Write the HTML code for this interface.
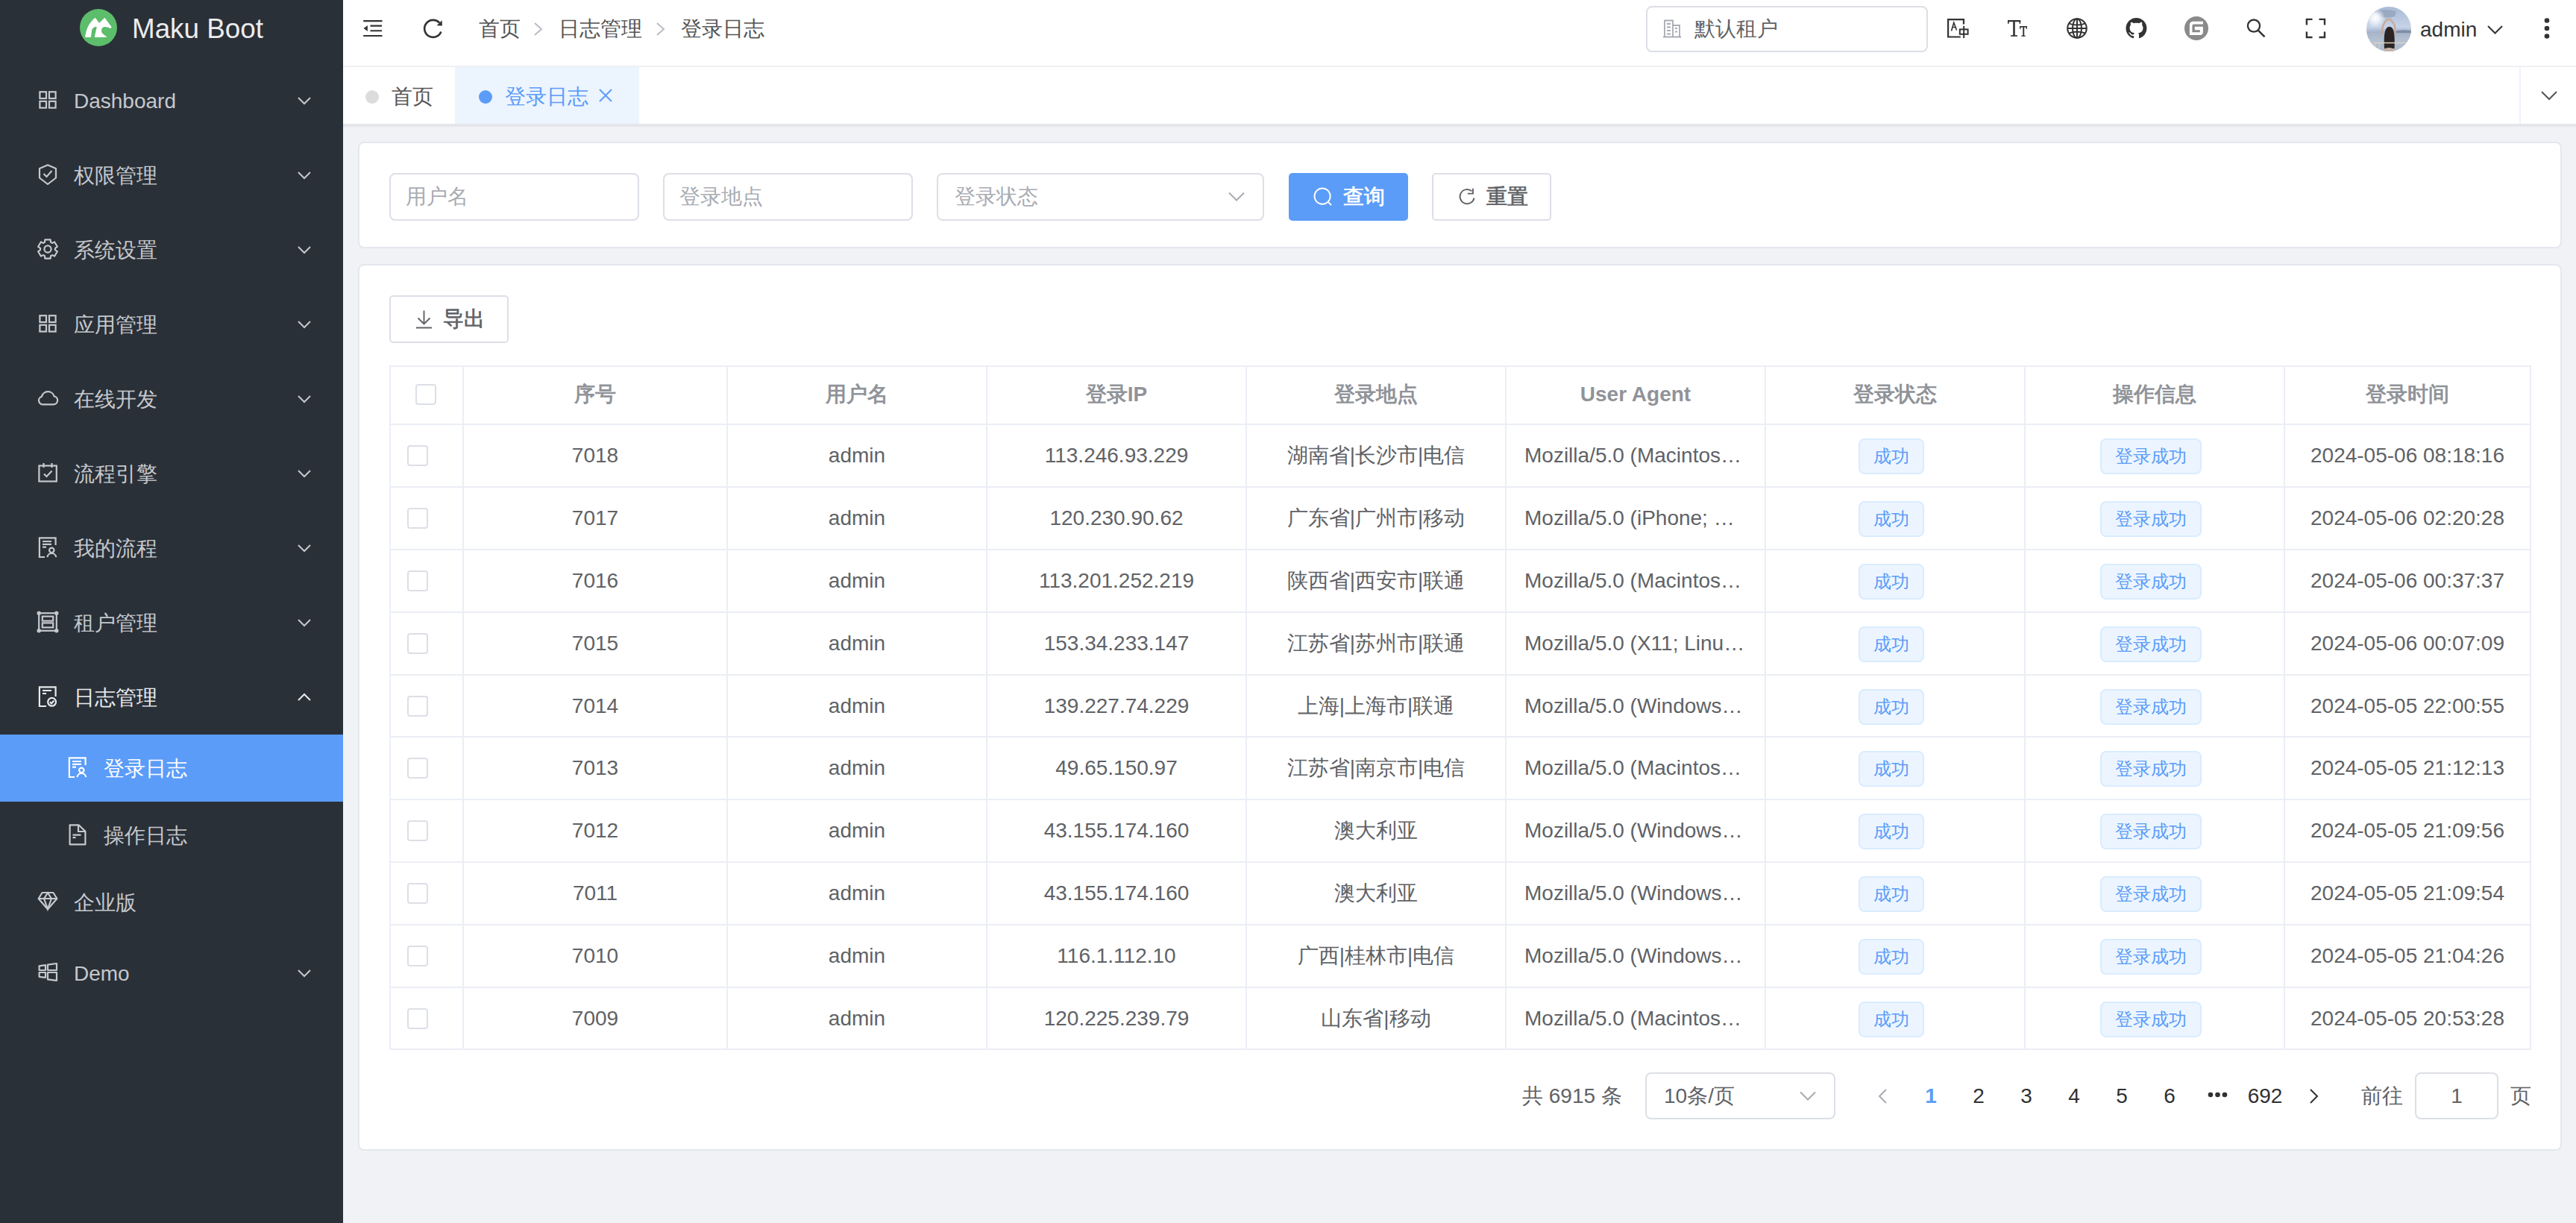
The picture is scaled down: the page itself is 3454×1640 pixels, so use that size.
<!DOCTYPE html>
<html><head><meta charset="utf-8">
<style>
*{box-sizing:border-box;margin:0;padding:0}
html,body{width:3454px;height:1640px;overflow:hidden}
body{position:relative;background:#f0f2f5;font-family:"Liberation Sans",sans-serif;color:#606266}
.a{position:absolute}
.t{position:absolute;white-space:nowrap;line-height:1}
svg{position:absolute;overflow:visible}
/* sidebar */
#sb{position:absolute;left:0;top:0;width:460px;height:1640px;background:#2a3038}
.mi{position:absolute;left:0;width:460px;height:100px}
.mi .t{left:99px;font-size:28px;color:#c5c8cc;top:36px}
.mi svg{left:50px;top:36px;width:28px;height:28px}
.mi .chev{left:398px;top:44px;width:20px;height:12px}
</style></head><body>
<div id="sb">
  <!-- logo -->
  <svg style="left:107px;top:12px" width="50" height="50" viewBox="0 0 50 50">
    <circle cx="25" cy="25" r="25" fill="#5cbd6b"/>
    <path d="M7.1 38 C8.5 26.5 13 17.5 20.6 11.8 L26.1 18.8 L33.4 11.8 L42.8 24.4 L41 25.9 C38.5 24.8 36 23.8 33 23.9 C28.8 24.4 27.6 30.5 31.2 33.6 L36.6 38 H19.7 L22.8 24 C19.5 23.5 16.6 25.6 16 29 L14.9 38 Z" fill="#fff"/></svg>
  <div class="t" style="left:177px;top:21px;font-size:36.8px;color:#ececec">Maku Boot</div>
<svg style="left:50px;top:120px" width="28" height="28" viewBox="0 0 28 28"><rect x="3.4" y="3.2" width="8.6" height="8.8" fill="none" stroke="#c5c8cc" stroke-width="2.2"/><rect x="16" y="3.2" width="8.6" height="8.8" fill="none" stroke="#c5c8cc" stroke-width="2.2"/><rect x="3.4" y="15.8" width="8.6" height="8.8" fill="none" stroke="#c5c8cc" stroke-width="2.2"/><rect x="16" y="15.8" width="8.6" height="8.8" fill="none" stroke="#c5c8cc" stroke-width="2.2"/></svg>
<div class="t" style="left:99px;top:122px;font-size:28px;color:#c5c8cc">Dashboard</div>
<svg style="left:399px;top:130px" width="18" height="10" viewBox="0 0 18 10"><polyline points="1,1 9,9 17,1" fill="none" stroke="#c5c8cc" stroke-width="2"/></svg>
<svg style="left:50px;top:220px" width="28" height="28" viewBox="0 0 28 28"><path d="M14 1.3 L25 6 V18.5 L14 27 L3 18.5 V6 Z" fill="none" stroke="#c5c8cc" stroke-width="2.2" stroke-linejoin="round"/><path d="M8.5 13 L12.5 17 L19.5 9" fill="none" stroke="#c5c8cc" stroke-width="2.2"/></svg>
<div class="t" style="left:99px;top:222px;font-size:28px;color:#c5c8cc">权限管理</div>
<svg style="left:399px;top:230px" width="18" height="10" viewBox="0 0 18 10"><polyline points="1,1 9,9 17,1" fill="none" stroke="#c5c8cc" stroke-width="2"/></svg>
<svg style="left:50px;top:320px" width="28" height="28" viewBox="0 0 28 28"><path d="M9.92 4.87 L10.35 1.31 L17.65 1.31 L18.08 4.87 L19.87 5.90 L23.16 4.50 L26.81 10.82 L23.95 12.97 L23.95 15.03 L26.81 17.18 L23.16 23.50 L19.87 22.10 L18.08 23.13 L17.65 26.69 L10.35 26.69 L9.92 23.13 L8.13 22.10 L4.84 23.50 L1.19 17.18 L4.05 15.03 L4.05 12.97 L1.19 10.82 L4.84 4.50 L8.13 5.90 Z" fill="none" stroke="#c5c8cc" stroke-width="2.2" stroke-linejoin="round"/><circle cx="14" cy="14" r="4.6" fill="none" stroke="#c5c8cc" stroke-width="2.2"/></svg>
<div class="t" style="left:99px;top:322px;font-size:28px;color:#c5c8cc">系统设置</div>
<svg style="left:399px;top:330px" width="18" height="10" viewBox="0 0 18 10"><polyline points="1,1 9,9 17,1" fill="none" stroke="#c5c8cc" stroke-width="2"/></svg>
<svg style="left:50px;top:420px" width="28" height="28" viewBox="0 0 28 28"><rect x="3.4" y="3.2" width="8.6" height="8.8" fill="none" stroke="#c5c8cc" stroke-width="2.2"/><rect x="16" y="3.2" width="8.6" height="8.8" fill="none" stroke="#c5c8cc" stroke-width="2.2"/><rect x="3.4" y="15.8" width="8.6" height="8.8" fill="none" stroke="#c5c8cc" stroke-width="2.2"/><rect x="16" y="15.8" width="8.6" height="8.8" fill="none" stroke="#c5c8cc" stroke-width="2.2"/></svg>
<div class="t" style="left:99px;top:422px;font-size:28px;color:#c5c8cc">应用管理</div>
<svg style="left:399px;top:430px" width="18" height="10" viewBox="0 0 18 10"><polyline points="1,1 9,9 17,1" fill="none" stroke="#c5c8cc" stroke-width="2"/></svg>
<svg style="left:50px;top:520px" width="28" height="28" viewBox="0 0 28 28"><path d="M7.5 22.4 H21.5 A5.6 5.6 0 0 0 22.6 11.3 A8.6 8.6 0 0 0 6 11.8 A5.4 5.4 0 0 0 7.5 22.4 Z" fill="none" stroke="#c5c8cc" stroke-width="2.2"/></svg>
<div class="t" style="left:99px;top:522px;font-size:28px;color:#c5c8cc">在线开发</div>
<svg style="left:399px;top:530px" width="18" height="10" viewBox="0 0 18 10"><polyline points="1,1 9,9 17,1" fill="none" stroke="#c5c8cc" stroke-width="2"/></svg>
<svg style="left:50px;top:620px" width="28" height="28" viewBox="0 0 28 28"><rect x="2.4" y="4.5" width="23.4" height="21" fill="none" stroke="#c5c8cc" stroke-width="2.2"/><path d="M8.5 1 V7 M19.5 1 V7" fill="none" stroke="#c5c8cc" stroke-width="2.2"/><path d="M9 15.5 L12.5 19 L19.5 11.5" fill="none" stroke="#c5c8cc" stroke-width="2.2"/></svg>
<div class="t" style="left:99px;top:622px;font-size:28px;color:#c5c8cc">流程引擎</div>
<svg style="left:399px;top:630px" width="18" height="10" viewBox="0 0 18 10"><polyline points="1,1 9,9 17,1" fill="none" stroke="#c5c8cc" stroke-width="2"/></svg>
<svg style="left:50px;top:720px" width="28" height="28" viewBox="0 0 28 28"><path d="M10 27 H2.9 V1.3 H24.6 V11" fill="none" stroke="#c5c8cc" stroke-width="2.2"/><path d="M7 6 H19 M7 9.8 H19 M7 13.6 H12" fill="none" stroke="#c5c8cc" stroke-width="2.2"/><circle cx="19.3" cy="17.8" r="3.2" fill="none" stroke="#c5c8cc" stroke-width="2.2"/><path d="M13.4 27.2 A6 6 0 0 1 25.3 27.2" fill="none" stroke="#c5c8cc" stroke-width="2.2"/></svg>
<div class="t" style="left:99px;top:722px;font-size:28px;color:#c5c8cc">我的流程</div>
<svg style="left:399px;top:730px" width="18" height="10" viewBox="0 0 18 10"><polyline points="1,1 9,9 17,1" fill="none" stroke="#c5c8cc" stroke-width="2"/></svg>
<svg style="left:50px;top:820px" width="28" height="28" viewBox="0 0 28 28"><rect x="2.2" y="2.2" width="23.6" height="23.6" fill="none" stroke="#c5c8cc" stroke-width="2.2"/><rect x="6.8" y="6.6" width="14.4" height="6" fill="none" stroke="#c5c8cc" stroke-width="2.2"/><rect x="6.8" y="15.4" width="14.4" height="6" fill="none" stroke="#c5c8cc" stroke-width="2.2"/><circle cx="2.2" cy="2.2" r="1.6" fill="none" stroke="#c5c8cc" stroke-width="2.2" stroke-width="1.4"/><circle cx="25.8" cy="2.2" r="1.6" fill="none" stroke="#c5c8cc" stroke-width="2.2" stroke-width="1.4"/><circle cx="2.2" cy="25.8" r="1.6" fill="none" stroke="#c5c8cc" stroke-width="2.2" stroke-width="1.4"/><circle cx="25.8" cy="25.8" r="1.6" fill="none" stroke="#c5c8cc" stroke-width="2.2" stroke-width="1.4"/></svg>
<div class="t" style="left:99px;top:822px;font-size:28px;color:#c5c8cc">租户管理</div>
<svg style="left:399px;top:830px" width="18" height="10" viewBox="0 0 18 10"><polyline points="1,1 9,9 17,1" fill="none" stroke="#c5c8cc" stroke-width="2"/></svg>
<svg style="left:50px;top:920px" width="28" height="28" viewBox="0 0 28 28"><path d="M12 27 H2.9 V1.3 H24.6 V14" fill="none" stroke="#e8eaec" stroke-width="2.2"/><path d="M7 6 H19 M7 10 H12" fill="none" stroke="#e8eaec" stroke-width="2.2"/><circle cx="19.6" cy="21.3" r="5.4" fill="none" stroke="#e8eaec" stroke-width="2.2"/><path d="M17 21.3 L19 23.3 L22.3 19.6" fill="none" stroke="#e8eaec" stroke-width="2.2" stroke-width="1.8"/></svg>
<div class="t" style="left:99px;top:922px;font-size:28px;color:#e8eaec">日志管理</div>
<svg style="left:399px;top:930px" width="18" height="10" viewBox="0 0 18 10"><polyline points="1,9 9,1 17,9" fill="none" stroke="#e8eaec" stroke-width="2"/></svg>
<div class="a" style="left:0;top:985px;width:460px;height:90px;background:#5b9cf8"></div>
<svg style="left:90px;top:1015px" width="28" height="28" viewBox="0 0 28 28"><path d="M10 27 H2.9 V1.3 H24.6 V11" fill="none" stroke="#ffffff" stroke-width="2.2"/><path d="M7 6 H19 M7 9.8 H19 M7 13.6 H12" fill="none" stroke="#ffffff" stroke-width="2.2"/><circle cx="19.3" cy="17.8" r="3.2" fill="none" stroke="#ffffff" stroke-width="2.2"/><path d="M13.4 27.2 A6 6 0 0 1 25.3 27.2" fill="none" stroke="#ffffff" stroke-width="2.2"/></svg>
<div class="t" style="left:139px;top:1017px;font-size:28px;color:#ffffff">登录日志</div>
<svg style="left:90px;top:1105px" width="28" height="28" viewBox="0 0 28 28"><path d="M3.6 1.3 H15.5 L24.4 9.8 V27.3 H3.6 Z" fill="none" stroke="#c5c8cc" stroke-width="2.2" stroke-linejoin="round"/><path d="M15 1.5 V10 H24" fill="none" stroke="#c5c8cc" stroke-width="2.2"/><path d="M7.5 14.6 H18.5 M7.5 18.2 H11.5" fill="none" stroke="#c5c8cc" stroke-width="2.2"/></svg>
<div class="t" style="left:139px;top:1107px;font-size:28px;color:#c5c8cc">操作日志</div>
<svg style="left:50px;top:1195px" width="28" height="28" viewBox="0 0 28 28"><path d="M1.6 10 L6.6 2 H21.4 L26.4 10 L14 24.3 Z" fill="none" stroke="#c5c8cc" stroke-width="2.2" stroke-width="1.8" stroke-linejoin="round"/><path d="M1.6 10 H26.4 M9 10 L14 2.2 L19 10 M9 10 L14 24 L19 10" fill="none" stroke="#c5c8cc" stroke-width="2.2" stroke-width="1.6"/></svg>
<div class="t" style="left:99px;top:1197px;font-size:28px;color:#c5c8cc">企业版</div>
<svg style="left:50px;top:1290px" width="28" height="28" viewBox="0 0 28 28"><path d="M2.6 5.3 L11 4.2 V11 H2.6 Z M14 3.6 L26 2 V11 H14 Z M2.6 14 H11 V20.8 L2.6 19.8 Z M14 14 H26 V24.8 L14 23.3 Z" fill="none" stroke="#c5c8cc" stroke-width="2.2" stroke-linejoin="round"/></svg>
<div class="t" style="left:99px;top:1292px;font-size:28px;color:#c5c8cc">Demo</div>
<svg style="left:399px;top:1300px" width="18" height="10" viewBox="0 0 18 10"><polyline points="1,1 9,9 17,1" fill="none" stroke="#c5c8cc" stroke-width="2"/></svg>
</div>

<!-- header -->
<div class="a" style="left:460px;top:0;width:2994px;height:88px;background:#fff"></div>
<div class="a" style="left:460px;top:88px;width:2994px;height:2px;background:#eff0f3"></div>
<svg style="left:486px;top:24px" width="28" height="28" viewBox="0 0 28 28"><path d="M1.2 4.1 H26.5 M10.5 10.6 H26 M10.5 17.2 H26 M1.2 24 H26.5" stroke="#333333" stroke-width="2.1"/><path d="M1.6 14 L6.9 9.9 V18.1 Z" fill="#333333"/></svg>
<svg style="left:565px;top:24px" width="30" height="30" viewBox="0 0 30 30"><path d="M26.4 18.5 A11.5 11.5 0 1 1 24.2 6.6" fill="none" stroke="#333333" stroke-width="2.6"/><path d="M27.6 3.2 L27.9 10.5 L20.6 10.2 Z" fill="#333333"/></svg>
<div class="t" style="left:642px;top:25px;font-size:28px;color:#555">首页</div>
<svg style="left:716px;top:30px" width="14" height="18" viewBox="0 0 14 18"><polyline points="1,1 10,9 1,17" fill="none" stroke="#b8bcc4" stroke-width="2"/></svg>
<div class="t" style="left:749px;top:25px;font-size:28px;color:#555">日志管理</div>
<svg style="left:880px;top:30px" width="14" height="18" viewBox="0 0 14 18"><polyline points="1,1 10,9 1,17" fill="none" stroke="#b8bcc4" stroke-width="2"/></svg>
<div class="t" style="left:913px;top:25px;font-size:28px;color:#555">登录日志</div>

<!-- tenant select -->
<div class="a" style="left:2207px;top:8px;width:378px;height:62px;border:2px solid #dcdfe6;border-radius:8px;background:#fff"></div>
<svg style="left:2228px;top:25px" width="28" height="28" viewBox="0 0 28 28"><path d="M2 24.5 H26 M4 24 V2.5 H15 V24 M15 9 H24 V24 M7 7 H12 M7 11.5 H12 M7 16 H12 M7 20.5 H12 M18 13 H21 M18 17.5 H21" fill="none" stroke="#a8abb2" stroke-width="1.8"/></svg>
<div class="t" style="left:2272px;top:25px;font-size:28px;color:#606266">默认租户</div>

<!-- right icons -->
<svg style="left:2611px;top:25px" width="30" height="27" viewBox="0 0 30 27"><path d="M1.1 25.5 V1.1 H22 V7.5 M1.1 24.5 H17.8" fill="none" stroke="#333333" stroke-width="2.2"/><path d="M5.5 16.5 L8.8 5.3 L12.5 15.5" fill="none" stroke="#333333" stroke-width="1.6"/><path d="M6.5 11.5 H12" stroke="#333333" stroke-width="1.4"/><rect x="16.8" y="14.4" width="10.8" height="6.4" fill="none" stroke="#333333" stroke-width="2"/><path d="M22.2 10 V26" stroke="#333333" stroke-width="2"/></svg>
<svg style="left:2690px;top:25px" width="30" height="26" viewBox="0 0 30 26"><g fill="#333333">
<rect x="2" y="2" width="17.2" height="2.2"/><rect x="2" y="2" width="1.7" height="4.7"/><rect x="17.5" y="2" width="1.7" height="4.7"/><rect x="9.2" y="2" width="2.6" height="21.8"/><rect x="6" y="22.2" width="9" height="1.6"/>
<rect x="18.2" y="10" width="9.8" height="1.6"/><rect x="18.2" y="10" width="1.4" height="3.8"/><rect x="26.6" y="10" width="1.4" height="3.8"/><rect x="22.3" y="10" width="1.9" height="13.8"/><rect x="20.2" y="22.6" width="5.6" height="1.2"/>
</g></svg>
<svg style="left:2771px;top:24px" width="28" height="28" viewBox="0 0 28 28"><g fill="none" stroke="#333333" stroke-width="2"><circle cx="14" cy="14" r="12.8"/><ellipse cx="14" cy="14" rx="6" ry="12.8"/><path d="M14 1.2 V26.8 M1.2 14 H26.8 M3.5 7.6 Q14 11.5 24.5 7.6 M3.5 20.4 Q14 16.5 24.5 20.4"/></g></svg>
<svg style="left:2850px;top:24px" width="29" height="28" viewBox="0 0 16 16"><path fill="#333333" d="M8 0C3.58 0 0 3.58 0 8c0 3.54 2.29 6.53 5.47 7.59.4.07.55-.17.55-.38 0-.19-.01-.82-.01-1.49-2.01.37-2.53-.49-2.69-.94-.09-.23-.48-.94-.82-1.13-.28-.15-.68-.52-.01-.53.63-.01 1.08.58 1.23.82.72 1.21 1.87.87 2.33.66.07-.52.28-.87.51-1.07-1.78-.2-3.64-.89-3.64-3.95 0-.87.31-1.59.82-2.15-.08-.2-.36-1.02.08-2.12 0 0 .67-.21 2.2.82.64-.18 1.32-.27 2-.27.68 0 1.36.09 2 .27 1.53-1.04 2.2-.82 2.2-.82.44 1.1.16 1.92.08 2.12.51.56.82 1.27.82 2.15 0 3.07-1.87 3.75-3.65 3.95.29.25.54.73.54 1.48 0 1.07-.01 1.93-.01 2.2 0 .21.15.46.55.38A8.013 8.013 0 0016 8c0-4.42-3.58-8-8-8z"/></svg>
<svg style="left:2929px;top:22px" width="32" height="32" viewBox="0 0 32 32"><circle cx="16" cy="16" r="16" fill="#8a8a8a"/><path d="M11.9 6.8 H24.9 V10.4 H12.4 Q10.4 10.4 10.4 12.4 V21.2 H20.8 V18.2 H13.8 V13.8 H24.9 V21 Q24.9 25.1 20.8 25.1 H6.9 V11.8 Q6.9 6.8 11.9 6.8 Z" fill="#fff"/></svg>
<svg style="left:3011px;top:24px" width="28" height="28" viewBox="0 0 28 28"><circle cx="11" cy="10.6" r="8.1" fill="none" stroke="#333333" stroke-width="2.3"/><path d="M16.8 16.6 L25.5 25.3" stroke="#333333" stroke-width="2.5"/></svg>
<svg style="left:3091px;top:24px" width="28" height="28" viewBox="0 0 28 28"><path d="M9.5 1.9 H1.9 V9.5 M18.5 1.9 H26 V9.5 M1.9 18.5 V26 H9.5 M26 18.5 V26 H18.5" fill="none" stroke="#333333" stroke-width="2.4"/></svg>
<!-- avatar -->
<svg style="left:3173px;top:9px" width="60" height="60" viewBox="0 0 60 60">
<defs>
<clipPath id="avc"><circle cx="30" cy="30" r="30"/></clipPath>
<linearGradient id="avsky" x1="0" y1="0" x2="0" y2="1"><stop offset="0" stop-color="#a9bad6"/><stop offset="0.45" stop-color="#c6d3e8"/><stop offset="0.56" stop-color="#a7b5cc"/><stop offset="0.6" stop-color="#9aa9c2"/><stop offset="0.75" stop-color="#b6c2d4"/><stop offset="1" stop-color="#a6b2c6"/></linearGradient>
<radialGradient id="avsun" cx="0.5" cy="0.5" r="0.5"><stop offset="0" stop-color="#ffffff"/><stop offset="0.4" stop-color="#f4f7fc" stop-opacity="0.9"/><stop offset="1" stop-color="#ffffff" stop-opacity="0"/></radialGradient>
</defs>
<g clip-path="url(#avc)">
<rect width="60" height="60" fill="url(#avsky)"/>
<path d="M10 6 Q25 2 40 6 L38 13 Q28 16 18 13 Z" fill="#93a3bb" opacity="0.8"/>
<circle cx="12" cy="15" r="13" fill="url(#avsun)"/>
<path d="M36 33 Q48 30 60 32 V36 H36 Z" fill="#7e8ea8"/>
<rect x="0" y="35" width="60" height="25" fill="#b3bfd1" opacity="0.6"/>
<path d="M22 38 Q20 28 24 22 Q26 19 28 17.5 M38 38 Q40 28 36 22 Q34 19 32 17.5" fill="none" stroke="#c9ab9c" stroke-width="2.4"/>
<path d="M26.5 17.5 Q28.5 15 30 18 Q31.5 15 33.5 17.5" fill="none" stroke="#c9ab9c" stroke-width="1.6"/>
<path d="M24 56 Q23 40 25 33 Q27 26.5 31 26.8 Q35 27 36.5 33 Q38.5 42 37.5 56 Z" fill="#2a2523"/>
<path d="M9 48.5 H56" stroke="#dcd2c6" stroke-width="1.6"/>
<path d="M12 48 V58 M17 48 V58" stroke="#d8cdc0" stroke-width="1.2"/>
<path d="M22 60 Q24 55 30 55 Q37 55 40 60 Z" fill="#c5b2a8"/>
</g>
</svg>
<div class="t" style="left:3245px;top:26px;font-size:28px;color:#333333">admin</div>
<svg style="left:3335px;top:34px" width="22" height="12" viewBox="0 0 22 12"><polyline points="1,1 10.5,10.5 20,1" fill="none" stroke="#333333" stroke-width="2"/></svg>
<svg style="left:3409px;top:23px" width="12" height="30" viewBox="0 0 12 30"><circle cx="6" cy="4.5" r="3.3" fill="#333333"/><circle cx="6" cy="15" r="3.3" fill="#333333"/><circle cx="6" cy="25.5" r="3.3" fill="#333333"/></svg>

<!-- tabs -->
<div class="a" style="left:460px;top:90px;width:2994px;height:76px;background:#fff"></div>
<div class="a" style="left:460px;top:166px;width:2994px;height:4px;background:#e4e6eb"></div>
<div class="a" style="left:490px;top:121px;width:18px;height:18px;border-radius:50%;background:#dcdcdc"></div>
<div class="t" style="left:525px;top:116px;font-size:28px;color:#555">首页</div>
<div class="a" style="left:610px;top:90px;width:247px;height:76px;background:#ecf4fe"></div>
<div class="a" style="left:642px;top:121px;width:18px;height:18px;border-radius:50%;background:#5b9cf8"></div>
<div class="t" style="left:677px;top:116px;font-size:28px;color:#5b9cf8">登录日志</div>
<svg style="left:802px;top:118px" width="20" height="20" viewBox="0 0 20 20"><path d="M2 2 L18 18 M18 2 L2 18" stroke="#5b9cf8" stroke-width="2"/></svg>
<div class="a" style="left:3378px;top:90px;width:2px;height:76px;background:#eef3fb"></div>
<svg style="left:3407px;top:122px" width="22" height="12" viewBox="0 0 22 12"><polyline points="1,1 11,11 21,1" fill="none" stroke="#555" stroke-width="2"/></svg>


<!-- card1: search -->
<div class="a" style="left:480px;top:190px;width:2955px;height:143px;background:#fff;border:2px solid #e4e7ed;border-radius:8px"></div>
<div class="a" style="left:522px;top:232px;width:335px;height:64px;border:2px solid #dcdfe6;border-radius:8px"></div>
<div class="t" style="left:544px;top:250px;font-size:28px;color:#a8abb2">用户名</div>
<div class="a" style="left:889px;top:232px;width:335px;height:64px;border:2px solid #dcdfe6;border-radius:8px"></div>
<div class="t" style="left:911px;top:250px;font-size:28px;color:#a8abb2">登录地点</div>
<div class="a" style="left:1256px;top:232px;width:439px;height:64px;border:2px solid #dcdfe6;border-radius:8px"></div>
<div class="t" style="left:1280px;top:250px;font-size:28px;color:#a8abb2">登录状态</div>
<svg style="left:1647px;top:257px" width="22" height="14" viewBox="0 0 22 14"><polyline points="1,1.5 11,11.5 21,1.5" fill="none" stroke="#a8abb2" stroke-width="2"/></svg>
<div class="a" style="left:1728px;top:232px;width:160px;height:64px;background:#5b9cf8;border-radius:5px"></div>
<svg style="left:1760px;top:250px" width="28" height="28" viewBox="0 0 28 28"><circle cx="13.1" cy="13.1" r="10.6" fill="none" stroke="#fff" stroke-width="1.9"/><path d="M20.6 20.6 L25 25" stroke="#fff" stroke-width="1.9"/></svg>
<div class="t" style="left:1801px;top:250px;font-size:28px;-webkit-text-stroke:0.7px #fff;color:#fff">查询</div>
<div class="a" style="left:1920px;top:232px;width:160px;height:64px;border:2px solid #dcdfe6;border-radius:5px;background:#fff"></div>
<svg style="left:1953px;top:250px" width="28" height="28" viewBox="0 0 28 28"><path d="M23.6 15.5 A9.6 9.6 0 1 1 20.4 6.3" fill="none" stroke="#606266" stroke-width="1.9"/><path d="M14.8 5.6 H22 V-1.2" fill="none" stroke="#606266" stroke-width="1.9" transform="translate(0,4)"/></svg>
<div class="t" style="left:1993px;top:250px;font-size:28px;-webkit-text-stroke:0.7px #606266;color:#606266">重置</div>

<!-- card2: table -->
<div class="a" style="left:480px;top:354px;width:2955px;height:1189px;background:#fff;border:2px solid #e4e7ed;border-radius:8px"></div>
<div class="a" style="left:522px;top:396px;width:160px;height:64px;border:2px solid #dcdfe6;border-radius:5px"></div>
<svg style="left:555px;top:414px" width="28" height="28" viewBox="0 0 28 28"><path d="M13.5 2.5 V20.5 M5.5 12.5 L13.5 20.5 L21.5 12.5 M3 25.5 H24" fill="none" stroke="#606266" stroke-width="1.9"/></svg>
<div class="t" style="left:594px;top:414px;font-size:28px;-webkit-text-stroke:0.7px #606266;color:#606266">导出</div>
<div class="a" style="left:522px;top:490px;width:2872px;height:918px;border:2px solid #ebeef5"></div>
<div class="a" style="left:620px;top:490px;width:2px;height:918px;background:#ebeef5"></div>
<div class="a" style="left:974px;top:490px;width:2px;height:918px;background:#ebeef5"></div>
<div class="a" style="left:1322px;top:490px;width:2px;height:918px;background:#ebeef5"></div>
<div class="a" style="left:1670px;top:490px;width:2px;height:918px;background:#ebeef5"></div>
<div class="a" style="left:2018px;top:490px;width:2px;height:918px;background:#ebeef5"></div>
<div class="a" style="left:2366px;top:490px;width:2px;height:918px;background:#ebeef5"></div>
<div class="a" style="left:2714px;top:490px;width:2px;height:918px;background:#ebeef5"></div>
<div class="a" style="left:3062px;top:490px;width:2px;height:918px;background:#ebeef5"></div>
<div class="a" style="left:522px;top:568px;width:2872px;height:2px;background:#ebeef5"></div>
<div class="a" style="left:522px;top:652px;width:2872px;height:2px;background:#ebeef5"></div>
<div class="a" style="left:522px;top:736px;width:2872px;height:2px;background:#ebeef5"></div>
<div class="a" style="left:522px;top:820px;width:2872px;height:2px;background:#ebeef5"></div>
<div class="a" style="left:522px;top:904px;width:2872px;height:2px;background:#ebeef5"></div>
<div class="a" style="left:522px;top:987px;width:2872px;height:2px;background:#ebeef5"></div>
<div class="a" style="left:522px;top:1071px;width:2872px;height:2px;background:#ebeef5"></div>
<div class="a" style="left:522px;top:1155px;width:2872px;height:2px;background:#ebeef5"></div>
<div class="a" style="left:522px;top:1239px;width:2872px;height:2px;background:#ebeef5"></div>
<div class="a" style="left:522px;top:1323px;width:2872px;height:2px;background:#ebeef5"></div>
<div class="a" style="left:557px;top:515px;width:28px;height:28px;border:2px solid #dcdfe6;border-radius:4px;background:#fff"></div>
<div class="t" style="left:622px;width:352px;text-align:center;top:515px;font-size:28px;font-weight:bold;color:#909399">序号</div>
<div class="t" style="left:976px;width:346px;text-align:center;top:515px;font-size:28px;font-weight:bold;color:#909399">用户名</div>
<div class="t" style="left:1324px;width:346px;text-align:center;top:515px;font-size:28px;font-weight:bold;color:#909399">登录IP</div>
<div class="t" style="left:1672px;width:346px;text-align:center;top:515px;font-size:28px;font-weight:bold;color:#909399">登录地点</div>
<div class="t" style="left:2020px;width:346px;text-align:center;top:515px;font-size:28px;font-weight:bold;color:#909399">User Agent</div>
<div class="t" style="left:2368px;width:346px;text-align:center;top:515px;font-size:28px;font-weight:bold;color:#909399">登录状态</div>
<div class="t" style="left:2716px;width:346px;text-align:center;top:515px;font-size:28px;font-weight:bold;color:#909399">操作信息</div>
<div class="t" style="left:3064px;width:328px;text-align:center;top:515px;font-size:28px;font-weight:bold;color:#909399">登录时间</div>
<div class="a" style="left:546px;top:597px;width:28px;height:28px;border:2px solid #dcdfe6;border-radius:4px;background:#fff"></div>
<div class="t" style="left:622px;width:352px;text-align:center;top:597px;font-size:28px;color:#606266">7018</div>
<div class="t" style="left:976px;width:346px;text-align:center;top:597px;font-size:28px;color:#606266">admin</div>
<div class="t" style="left:1324px;width:346px;text-align:center;top:597px;font-size:28px;color:#606266">113.246.93.229</div>
<div class="t" style="left:1672px;width:346px;text-align:center;top:597px;font-size:28px;color:#606266">湖南省|长沙市|电信</div>
<div class="t" style="left:3064px;width:328px;text-align:center;top:597px;font-size:28px;color:#606266">2024-05-06 08:18:16</div>
<div class="t" style="left:2044px;top:597px;font-size:28px;color:#606266">Mozilla/5.0 (Macintos…</div>
<div class="a" style="left:2492px;top:588px;width:88px;height:48px;background:#ecf5ff;border:2px solid #d9ecff;border-radius:8px"></div>
<div class="t" style="left:2492px;width:88px;text-align:center;top:600px;font-size:24px;color:#5b9cf8">成功</div>
<div class="a" style="left:2816px;top:588px;width:136px;height:48px;background:#ecf5ff;border:2px solid #d9ecff;border-radius:8px"></div>
<div class="t" style="left:2816px;width:136px;text-align:center;top:600px;font-size:24px;color:#5b9cf8">登录成功</div>
<div class="a" style="left:546px;top:681px;width:28px;height:28px;border:2px solid #dcdfe6;border-radius:4px;background:#fff"></div>
<div class="t" style="left:622px;width:352px;text-align:center;top:681px;font-size:28px;color:#606266">7017</div>
<div class="t" style="left:976px;width:346px;text-align:center;top:681px;font-size:28px;color:#606266">admin</div>
<div class="t" style="left:1324px;width:346px;text-align:center;top:681px;font-size:28px;color:#606266">120.230.90.62</div>
<div class="t" style="left:1672px;width:346px;text-align:center;top:681px;font-size:28px;color:#606266">广东省|广州市|移动</div>
<div class="t" style="left:3064px;width:328px;text-align:center;top:681px;font-size:28px;color:#606266">2024-05-06 02:20:28</div>
<div class="t" style="left:2044px;top:681px;font-size:28px;color:#606266">Mozilla/5.0 (iPhone; …</div>
<div class="a" style="left:2492px;top:672px;width:88px;height:48px;background:#ecf5ff;border:2px solid #d9ecff;border-radius:8px"></div>
<div class="t" style="left:2492px;width:88px;text-align:center;top:684px;font-size:24px;color:#5b9cf8">成功</div>
<div class="a" style="left:2816px;top:672px;width:136px;height:48px;background:#ecf5ff;border:2px solid #d9ecff;border-radius:8px"></div>
<div class="t" style="left:2816px;width:136px;text-align:center;top:684px;font-size:24px;color:#5b9cf8">登录成功</div>
<div class="a" style="left:546px;top:765px;width:28px;height:28px;border:2px solid #dcdfe6;border-radius:4px;background:#fff"></div>
<div class="t" style="left:622px;width:352px;text-align:center;top:765px;font-size:28px;color:#606266">7016</div>
<div class="t" style="left:976px;width:346px;text-align:center;top:765px;font-size:28px;color:#606266">admin</div>
<div class="t" style="left:1324px;width:346px;text-align:center;top:765px;font-size:28px;color:#606266">113.201.252.219</div>
<div class="t" style="left:1672px;width:346px;text-align:center;top:765px;font-size:28px;color:#606266">陕西省|西安市|联通</div>
<div class="t" style="left:3064px;width:328px;text-align:center;top:765px;font-size:28px;color:#606266">2024-05-06 00:37:37</div>
<div class="t" style="left:2044px;top:765px;font-size:28px;color:#606266">Mozilla/5.0 (Macintos…</div>
<div class="a" style="left:2492px;top:756px;width:88px;height:48px;background:#ecf5ff;border:2px solid #d9ecff;border-radius:8px"></div>
<div class="t" style="left:2492px;width:88px;text-align:center;top:768px;font-size:24px;color:#5b9cf8">成功</div>
<div class="a" style="left:2816px;top:756px;width:136px;height:48px;background:#ecf5ff;border:2px solid #d9ecff;border-radius:8px"></div>
<div class="t" style="left:2816px;width:136px;text-align:center;top:768px;font-size:24px;color:#5b9cf8">登录成功</div>
<div class="a" style="left:546px;top:849px;width:28px;height:28px;border:2px solid #dcdfe6;border-radius:4px;background:#fff"></div>
<div class="t" style="left:622px;width:352px;text-align:center;top:849px;font-size:28px;color:#606266">7015</div>
<div class="t" style="left:976px;width:346px;text-align:center;top:849px;font-size:28px;color:#606266">admin</div>
<div class="t" style="left:1324px;width:346px;text-align:center;top:849px;font-size:28px;color:#606266">153.34.233.147</div>
<div class="t" style="left:1672px;width:346px;text-align:center;top:849px;font-size:28px;color:#606266">江苏省|苏州市|联通</div>
<div class="t" style="left:3064px;width:328px;text-align:center;top:849px;font-size:28px;color:#606266">2024-05-06 00:07:09</div>
<div class="t" style="left:2044px;top:849px;font-size:28px;color:#606266">Mozilla/5.0 (X11; Linu…</div>
<div class="a" style="left:2492px;top:840px;width:88px;height:48px;background:#ecf5ff;border:2px solid #d9ecff;border-radius:8px"></div>
<div class="t" style="left:2492px;width:88px;text-align:center;top:852px;font-size:24px;color:#5b9cf8">成功</div>
<div class="a" style="left:2816px;top:840px;width:136px;height:48px;background:#ecf5ff;border:2px solid #d9ecff;border-radius:8px"></div>
<div class="t" style="left:2816px;width:136px;text-align:center;top:852px;font-size:24px;color:#5b9cf8">登录成功</div>
<div class="a" style="left:546px;top:933px;width:28px;height:28px;border:2px solid #dcdfe6;border-radius:4px;background:#fff"></div>
<div class="t" style="left:622px;width:352px;text-align:center;top:933px;font-size:28px;color:#606266">7014</div>
<div class="t" style="left:976px;width:346px;text-align:center;top:933px;font-size:28px;color:#606266">admin</div>
<div class="t" style="left:1324px;width:346px;text-align:center;top:933px;font-size:28px;color:#606266">139.227.74.229</div>
<div class="t" style="left:1672px;width:346px;text-align:center;top:933px;font-size:28px;color:#606266">上海|上海市|联通</div>
<div class="t" style="left:3064px;width:328px;text-align:center;top:933px;font-size:28px;color:#606266">2024-05-05 22:00:55</div>
<div class="t" style="left:2044px;top:933px;font-size:28px;color:#606266">Mozilla/5.0 (Windows…</div>
<div class="a" style="left:2492px;top:924px;width:88px;height:48px;background:#ecf5ff;border:2px solid #d9ecff;border-radius:8px"></div>
<div class="t" style="left:2492px;width:88px;text-align:center;top:936px;font-size:24px;color:#5b9cf8">成功</div>
<div class="a" style="left:2816px;top:924px;width:136px;height:48px;background:#ecf5ff;border:2px solid #d9ecff;border-radius:8px"></div>
<div class="t" style="left:2816px;width:136px;text-align:center;top:936px;font-size:24px;color:#5b9cf8">登录成功</div>
<div class="a" style="left:546px;top:1016px;width:28px;height:28px;border:2px solid #dcdfe6;border-radius:4px;background:#fff"></div>
<div class="t" style="left:622px;width:352px;text-align:center;top:1016px;font-size:28px;color:#606266">7013</div>
<div class="t" style="left:976px;width:346px;text-align:center;top:1016px;font-size:28px;color:#606266">admin</div>
<div class="t" style="left:1324px;width:346px;text-align:center;top:1016px;font-size:28px;color:#606266">49.65.150.97</div>
<div class="t" style="left:1672px;width:346px;text-align:center;top:1016px;font-size:28px;color:#606266">江苏省|南京市|电信</div>
<div class="t" style="left:3064px;width:328px;text-align:center;top:1016px;font-size:28px;color:#606266">2024-05-05 21:12:13</div>
<div class="t" style="left:2044px;top:1016px;font-size:28px;color:#606266">Mozilla/5.0 (Macintos…</div>
<div class="a" style="left:2492px;top:1007px;width:88px;height:48px;background:#ecf5ff;border:2px solid #d9ecff;border-radius:8px"></div>
<div class="t" style="left:2492px;width:88px;text-align:center;top:1019px;font-size:24px;color:#5b9cf8">成功</div>
<div class="a" style="left:2816px;top:1007px;width:136px;height:48px;background:#ecf5ff;border:2px solid #d9ecff;border-radius:8px"></div>
<div class="t" style="left:2816px;width:136px;text-align:center;top:1019px;font-size:24px;color:#5b9cf8">登录成功</div>
<div class="a" style="left:546px;top:1100px;width:28px;height:28px;border:2px solid #dcdfe6;border-radius:4px;background:#fff"></div>
<div class="t" style="left:622px;width:352px;text-align:center;top:1100px;font-size:28px;color:#606266">7012</div>
<div class="t" style="left:976px;width:346px;text-align:center;top:1100px;font-size:28px;color:#606266">admin</div>
<div class="t" style="left:1324px;width:346px;text-align:center;top:1100px;font-size:28px;color:#606266">43.155.174.160</div>
<div class="t" style="left:1672px;width:346px;text-align:center;top:1100px;font-size:28px;color:#606266">澳大利亚</div>
<div class="t" style="left:3064px;width:328px;text-align:center;top:1100px;font-size:28px;color:#606266">2024-05-05 21:09:56</div>
<div class="t" style="left:2044px;top:1100px;font-size:28px;color:#606266">Mozilla/5.0 (Windows…</div>
<div class="a" style="left:2492px;top:1091px;width:88px;height:48px;background:#ecf5ff;border:2px solid #d9ecff;border-radius:8px"></div>
<div class="t" style="left:2492px;width:88px;text-align:center;top:1103px;font-size:24px;color:#5b9cf8">成功</div>
<div class="a" style="left:2816px;top:1091px;width:136px;height:48px;background:#ecf5ff;border:2px solid #d9ecff;border-radius:8px"></div>
<div class="t" style="left:2816px;width:136px;text-align:center;top:1103px;font-size:24px;color:#5b9cf8">登录成功</div>
<div class="a" style="left:546px;top:1184px;width:28px;height:28px;border:2px solid #dcdfe6;border-radius:4px;background:#fff"></div>
<div class="t" style="left:622px;width:352px;text-align:center;top:1184px;font-size:28px;color:#606266">7011</div>
<div class="t" style="left:976px;width:346px;text-align:center;top:1184px;font-size:28px;color:#606266">admin</div>
<div class="t" style="left:1324px;width:346px;text-align:center;top:1184px;font-size:28px;color:#606266">43.155.174.160</div>
<div class="t" style="left:1672px;width:346px;text-align:center;top:1184px;font-size:28px;color:#606266">澳大利亚</div>
<div class="t" style="left:3064px;width:328px;text-align:center;top:1184px;font-size:28px;color:#606266">2024-05-05 21:09:54</div>
<div class="t" style="left:2044px;top:1184px;font-size:28px;color:#606266">Mozilla/5.0 (Windows…</div>
<div class="a" style="left:2492px;top:1175px;width:88px;height:48px;background:#ecf5ff;border:2px solid #d9ecff;border-radius:8px"></div>
<div class="t" style="left:2492px;width:88px;text-align:center;top:1187px;font-size:24px;color:#5b9cf8">成功</div>
<div class="a" style="left:2816px;top:1175px;width:136px;height:48px;background:#ecf5ff;border:2px solid #d9ecff;border-radius:8px"></div>
<div class="t" style="left:2816px;width:136px;text-align:center;top:1187px;font-size:24px;color:#5b9cf8">登录成功</div>
<div class="a" style="left:546px;top:1268px;width:28px;height:28px;border:2px solid #dcdfe6;border-radius:4px;background:#fff"></div>
<div class="t" style="left:622px;width:352px;text-align:center;top:1268px;font-size:28px;color:#606266">7010</div>
<div class="t" style="left:976px;width:346px;text-align:center;top:1268px;font-size:28px;color:#606266">admin</div>
<div class="t" style="left:1324px;width:346px;text-align:center;top:1268px;font-size:28px;color:#606266">116.1.112.10</div>
<div class="t" style="left:1672px;width:346px;text-align:center;top:1268px;font-size:28px;color:#606266">广西|桂林市|电信</div>
<div class="t" style="left:3064px;width:328px;text-align:center;top:1268px;font-size:28px;color:#606266">2024-05-05 21:04:26</div>
<div class="t" style="left:2044px;top:1268px;font-size:28px;color:#606266">Mozilla/5.0 (Windows…</div>
<div class="a" style="left:2492px;top:1259px;width:88px;height:48px;background:#ecf5ff;border:2px solid #d9ecff;border-radius:8px"></div>
<div class="t" style="left:2492px;width:88px;text-align:center;top:1271px;font-size:24px;color:#5b9cf8">成功</div>
<div class="a" style="left:2816px;top:1259px;width:136px;height:48px;background:#ecf5ff;border:2px solid #d9ecff;border-radius:8px"></div>
<div class="t" style="left:2816px;width:136px;text-align:center;top:1271px;font-size:24px;color:#5b9cf8">登录成功</div>
<div class="a" style="left:546px;top:1352px;width:28px;height:28px;border:2px solid #dcdfe6;border-radius:4px;background:#fff"></div>
<div class="t" style="left:622px;width:352px;text-align:center;top:1352px;font-size:28px;color:#606266">7009</div>
<div class="t" style="left:976px;width:346px;text-align:center;top:1352px;font-size:28px;color:#606266">admin</div>
<div class="t" style="left:1324px;width:346px;text-align:center;top:1352px;font-size:28px;color:#606266">120.225.239.79</div>
<div class="t" style="left:1672px;width:346px;text-align:center;top:1352px;font-size:28px;color:#606266">山东省|移动</div>
<div class="t" style="left:3064px;width:328px;text-align:center;top:1352px;font-size:28px;color:#606266">2024-05-05 20:53:28</div>
<div class="t" style="left:2044px;top:1352px;font-size:28px;color:#606266">Mozilla/5.0 (Macintos…</div>
<div class="a" style="left:2492px;top:1343px;width:88px;height:48px;background:#ecf5ff;border:2px solid #d9ecff;border-radius:8px"></div>
<div class="t" style="left:2492px;width:88px;text-align:center;top:1355px;font-size:24px;color:#5b9cf8">成功</div>
<div class="a" style="left:2816px;top:1343px;width:136px;height:48px;background:#ecf5ff;border:2px solid #d9ecff;border-radius:8px"></div>
<div class="t" style="left:2816px;width:136px;text-align:center;top:1355px;font-size:24px;color:#5b9cf8">登录成功</div>
<div class="t" style="left:2041px;top:1456px;font-size:28px;color:#606266">共 6915 条</div>
<div class="a" style="left:2206px;top:1438px;width:255px;height:63px;border:2px solid #dcdfe6;border-radius:8px"></div>
<div class="t" style="left:2231px;top:1456px;font-size:28px;color:#606266">10条/页</div>
<svg style="left:2413px;top:1463px" width="22" height="14" viewBox="0 0 22 14"><polyline points="1,1.5 11,11.5 21,1.5" fill="none" stroke="#a8abb2" stroke-width="2"/></svg>
<svg style="left:2518px;top:1460px" width="14" height="20" viewBox="0 0 14 20"><polyline points="11,1 2,10 11,19" fill="none" stroke="#a8abb2" stroke-width="2"/></svg>
<div class="t" style="left:2557px;width:64px;text-align:center;top:1456px;font-size:28px;font-weight:bold;color:#5b9cf8">1</div>
<div class="t" style="left:2621px;width:64px;text-align:center;top:1456px;font-size:28px;color:#303133">2</div>
<div class="t" style="left:2685px;width:64px;text-align:center;top:1456px;font-size:28px;color:#303133">3</div>
<div class="t" style="left:2749px;width:64px;text-align:center;top:1456px;font-size:28px;color:#303133">4</div>
<div class="t" style="left:2813px;width:64px;text-align:center;top:1456px;font-size:28px;color:#303133">5</div>
<div class="t" style="left:2877px;width:64px;text-align:center;top:1456px;font-size:28px;color:#303133">6</div>
<svg style="left:2960px;top:1464px" width="28" height="8" viewBox="0 0 28 8"><circle cx="4" cy="4" r="3.3" fill="#303133"/><circle cx="13.5" cy="4" r="3.3" fill="#303133"/><circle cx="23" cy="4" r="3.3" fill="#303133"/></svg>
<div class="t" style="left:3005px;width:64px;text-align:center;top:1456px;font-size:28px;color:#303133">692</div>
<svg style="left:3095px;top:1460px" width="14" height="20" viewBox="0 0 14 20"><polyline points="3,1 12,10 3,19" fill="none" stroke="#303133" stroke-width="2"/></svg>
<div class="t" style="left:3166px;top:1456px;font-size:28px;color:#606266">前往</div>
<div class="a" style="left:3238px;top:1438px;width:112px;height:63px;border:2px solid #dcdfe6;border-radius:8px"></div>
<div class="t" style="left:3238px;width:112px;text-align:center;top:1456px;font-size:28px;color:#606266">1</div>
<div class="t" style="left:3366px;top:1456px;font-size:28px;color:#606266">页</div>

</body></html>
